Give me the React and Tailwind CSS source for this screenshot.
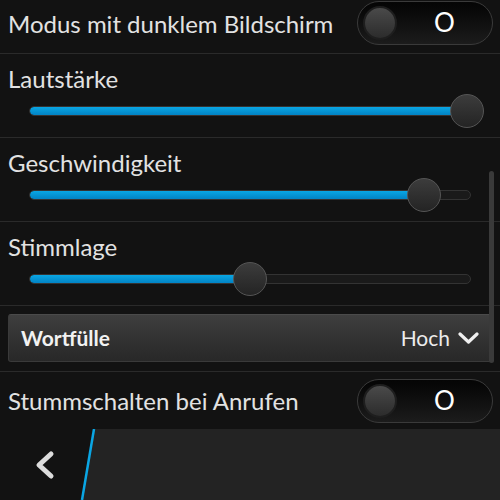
import React from 'react';

const font = { fontFamily: 'Lato, "Noto Sans", sans-serif' };

const Toggle = () => (
  <div className="w-[136px] h-[44px] rounded-full border border-[#3a3a3a] bg-gradient-to-b from-[#050505] to-[#1c1c1c] flex items-center pl-[5px] shrink-0">
    <div className="w-[34px] h-[34px] rounded-full bg-gradient-to-b from-[#4a4a4a] to-[#2c2c2c] border-2 border-[#1e1e1e]" />
    <div className="flex-1 text-center text-white text-[26px] leading-none pb-[2px]">O</div>
  </div>
);

const Slider = ({ pos, max }) => (
  <div className="relative h-[34px] ml-[29px] w-[442px] flex items-center">
    <div className="w-full h-[10px] rounded-full bg-[#1a1a1a] border border-[#333] overflow-hidden">
      <div
        className="h-full rounded-full bg-gradient-to-b from-[#0aa6e4] to-[#0283c4]"
        style={{ width: max ? '100%' : pos + 'px' }}
      />
    </div>
    <div
      className="absolute top-0 w-[34px] h-[34px] rounded-full bg-gradient-to-b from-[#3c3c3c] to-[#242424] border border-[#555]"
      style={{ left: pos - 17 + 'px' }}
    />
  </div>
);

const SliderRow = ({ label, pos, max }) => (
  <div className="h-[84px] border-b border-[#2a2a2a] pt-[9px]">
    <div className="pl-2 text-[24px] text-[#e2e2e2] leading-[31px]">{label}</div>
    <Slider pos={pos} max={max} />
  </div>
);

export default function App() {
  return (
    <div className="w-[500px] h-[500px] bg-[#121212] flex flex-col overflow-hidden" style={font}>
      <div className="relative flex-1 flex flex-col">
        {/* dark mode */}
        <div className="h-[54px] border-b border-[#2a2a2a] flex items-start justify-between pl-2 pr-[7px] pt-[1px]">
          <span className="text-[24px] text-[#e2e2e2] leading-[46px]">Modus mit dunklem Bildschirm</span>
          <Toggle />
        </div>

        <SliderRow label="Lautstärke" pos={438} max />
        <SliderRow label="Geschwindigkeit" pos={395} />
        <SliderRow label="Stimmlage" pos={221} />

        {/* dropdown */}
        <div className="h-[66px] border-b border-[#2a2a2a] pt-[8px] pl-2 pr-[8px]">
          <div className="h-[48px] rounded-[3px] border border-[#3a3a3a] border-t-[#4a4a4a] bg-gradient-to-b from-[#3e3e3e] to-[#282828] flex items-center justify-between pl-[12px] pr-[12px]">
            <span className="text-[21px] font-bold text-[#f2f2f2]">Wortfülle</span>
            <div className="flex items-center gap-[8px]">
              <span className="text-[21px] text-[#ececec]">Hoch</span>
              <svg width="21" height="14" viewBox="0 0 21 14">
                <path d="M2 3 L10.5 11 L19 3" fill="none" stroke="#f0f0f0" strokeWidth="3.2" strokeLinecap="round" strokeLinejoin="round" />
              </svg>
            </div>
          </div>
        </div>

        {/* mute */}
        <div className="flex-1 flex items-center justify-between pl-2 pr-[7px]">
          <span className="text-[24px] text-[#e2e2e2]">Stummschalten bei Anrufen</span>
          <Toggle />
        </div>

        {/* scrollbar */}
        <div className="absolute right-[6px] top-[171px] w-[5px] h-[192px] rounded-full bg-[#3a3a3a]" />
      </div>

      {/* action bar */}
      <div className="h-[71px] bg-[#232323] relative shrink-0">
        <svg width="100" height="71" viewBox="0 0 100 71" className="absolute left-0 top-0">
          <polygon points="0,0 94,0 82,71 0,71" fill="#121212" />
          <line x1="94" y1="0" x2="82" y2="71" stroke="#0aa6e4" strokeWidth="2.5" />
          <path d="M51 25 L39 36 L51 47" fill="none" stroke="#dcdcdc" strokeWidth="5" strokeLinecap="round" strokeLinejoin="round" />
        </svg>
      </div>
    </div>
  );
}
